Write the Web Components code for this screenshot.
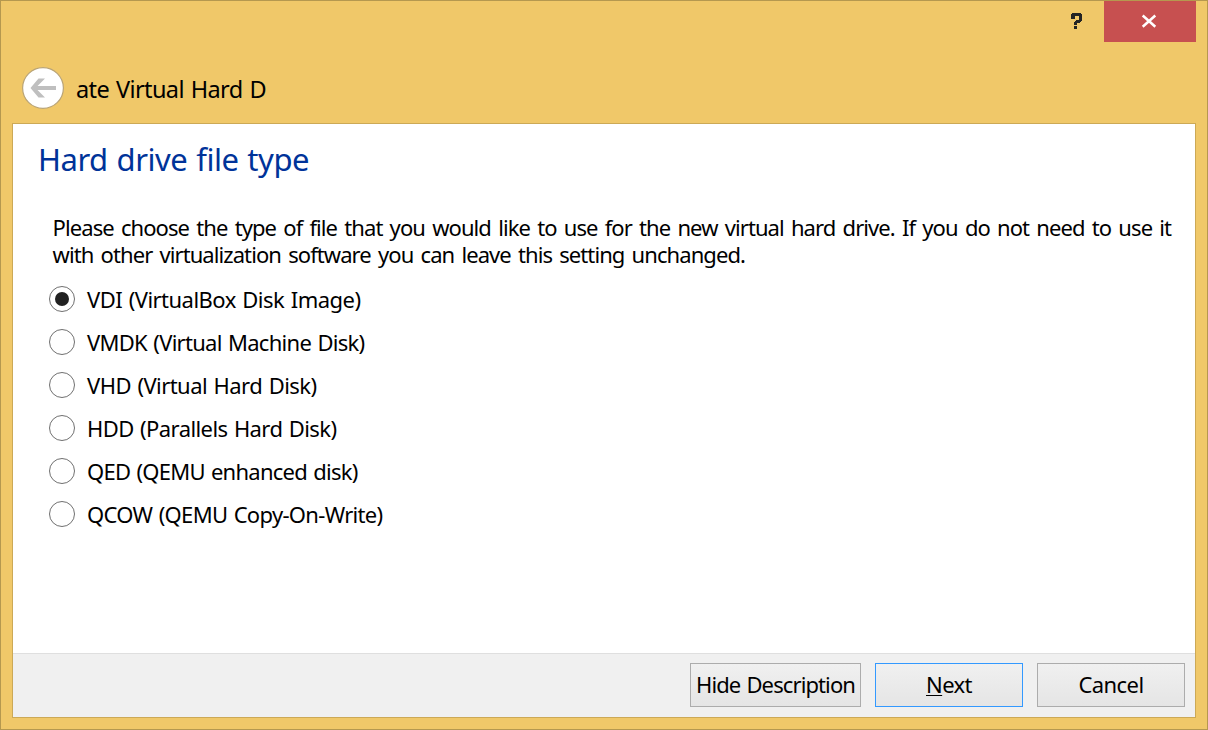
<!DOCTYPE html>
<html lang="en">
<head>
<meta charset="utf-8">
<title>Create Virtual Hard Drive</title>
<style>
html,body{margin:0;height:100%;overflow:hidden}
body{font-family:"Noto Sans","Open Sans",sans-serif;font-size:22px;color:#000}
</style>
</head>
<body>
<wizard-window>
  <title-bar slot="title"></title-bar>
  <wizard-header slot="header"><fit-text width="190">ate Virtual Hard D</fit-text></wizard-header>
  <wizard-page slot="page">
    <fit-text slot="heading" width="271">Hard drive file type</fit-text>
    <fit-text slot="text" width="1118.5" chars="118">Please choose the type of file that you would like to use for the new virtual hard drive. If you do not need to use it<br>with other virtualization software you can leave this setting unchanged.</fit-text>
    <radio-option checked><fit-text width="273.5">VDI (VirtualBox Disk Image)</fit-text></radio-option>
    <radio-option><fit-text width="277.5">VMDK (Virtual Machine Disk)</fit-text></radio-option>
    <radio-option><fit-text width="229.5">VHD (Virtual Hard Disk)</fit-text></radio-option>
    <radio-option><fit-text width="249.5">HDD (Parallels Hard Disk)</fit-text></radio-option>
    <radio-option><fit-text width="270.5">QED (QEMU enhanced disk)</fit-text></radio-option>
    <radio-option><fit-text width="295.5">QCOW (QEMU Copy-On-Write)</fit-text></radio-option>
  </wizard-page>
  <wizard-footer slot="footer">
    <push-button style="width:171px"><fit-text width="159">Hide Description</fit-text></push-button>
    <push-button primary style="width:148px"><fit-text width="46"><u>N</u>ext</fit-text></push-button>
    <push-button style="width:148px"><fit-text width="65">Cancel</fit-text></push-button>
  </wizard-footer>
</wizard-window>
<script>
function define(name, html, setup) {
  customElements.define(name, class extends HTMLElement {
    constructor() {
      super();
      this.attachShadow({ mode: 'open' }).innerHTML = html;
    }
    connectedCallback() { if (setup) setup(this); }
  });
}

define('wizard-window', `<style>
  :host{display:flex;flex-direction:column;box-sizing:border-box;height:100vh;padding:0 11px 11px;background:#f0c869;border:1px solid #b5984f}
  .client{flex:1;display:flex;flex-direction:column;background:#fff;border:1px solid #cca956}
  .page{flex:1}
</style><slot name="title"></slot><slot name="header"></slot>
<div class="client"><div class="page"><slot name="page"></slot></div><slot name="footer"></slot></div>`);

define('title-bar', `<style>
  :host{display:flex;justify-content:flex-end;height:41px}
  .help{width:55px;display:flex}
  .close{width:92px;background:#c75050;display:flex}
  svg{display:block}
</style>
<div class="help"><svg width="55" height="41" shape-rendering="crispEdges" fill="#242424"><path d="M23 12h9v1h1v7h-1v1h-1v1h-3v2h-3v-3h1v-1h1v-1h3v-4h-4v3h-4v-5h1z"/><path d="M25 25h3v3h-3z"/></svg></div>
<div class="close"><svg width="92" height="41" fill="none" stroke="#fff" stroke-width="2.5"><path d="M38.7 14.5 51.3 25.8M51.3 14.5 38.7 25.8"/></svg></div>`);

define('wizard-header', `<style>
  :host{display:flex;align-items:center;height:81px;box-sizing:border-box;padding:10px 0 0 10px;font-size:23.5px}
  svg{display:block;margin-right:12px}
  .title{padding-top:2px}
</style>
<svg width="42" height="42"><circle cx="21" cy="21" r="20.4" fill="#fff" stroke="#b9a477" stroke-width="1.2"/><path d="M8.5 21 16.5 11.5h6.5L15.5 19H34v4H15.5L23 30.5h-6.5z" fill="#bfbfbf"/></svg><div class="title"><slot></slot></div>`);

define('wizard-page', `<style>
  :host{display:block;padding:15px 0 0 25px}
  .heading{height:40px;line-height:40px;font-size:31px;color:#003399}
  .text{padding:35px 0 9px 14.6px;line-height:27px;--word-gap:2.4px}
  .options{display:flex;flex-direction:column;padding-left:11px}
</style>
<div class="heading"><slot name="heading"></slot></div>
<div class="text"><slot name="text"></slot></div>
<div class="options"><slot></slot></div>`);

define('radio-option', `<style>
  :host{display:flex;align-items:center;height:43px}
  i{width:26px;height:26px;box-sizing:border-box;border:1px solid #707070;border-radius:50%;margin-right:12px;display:flex;align-items:center;justify-content:center}
  :host([checked]) i::after{content:"";width:14px;height:14px;border-radius:50%;background:#212121}
</style><i></i><slot></slot>`);

define('wizard-footer', `<style>
  :host{display:flex;justify-content:flex-end;gap:14px;height:64px;padding:9px 10px 0 0;box-sizing:border-box;background:#f0f0f0;border-top:1px solid #dfdfdf}
</style><slot></slot>`);

define('push-button', `<style>
  :host{display:flex;align-items:center;justify-content:center;box-sizing:border-box;height:44px;padding-bottom:2px;border:1px solid #acacac;background:linear-gradient(#f0f0f0,#e5e5e5)}
  :host([primary]){border-color:#3399ff}
</style><slot></slot>`);

/* Text whose letter spacing is tuned so that its widest line has the given width;
   chars is the length of that line when there are several. */
define('fit-text', `<style>
  :host{display:block;white-space:nowrap}
  span{display:inline-block;vertical-align:top;word-spacing:var(--word-gap,1.3px)}
  ::slotted(u){text-decoration-thickness:1px;text-underline-offset:2px}
</style><span><slot></slot></span>`, el => {
  const span = el.shadowRoot.querySelector('span');
  const extra = Number(el.getAttribute('width')) - span.getBoundingClientRect().width;
  const chars = Number(el.getAttribute('chars')) || el.textContent.length;
  span.style.letterSpacing = (extra / chars) + 'px';
});
</script>
</body>
</html>
